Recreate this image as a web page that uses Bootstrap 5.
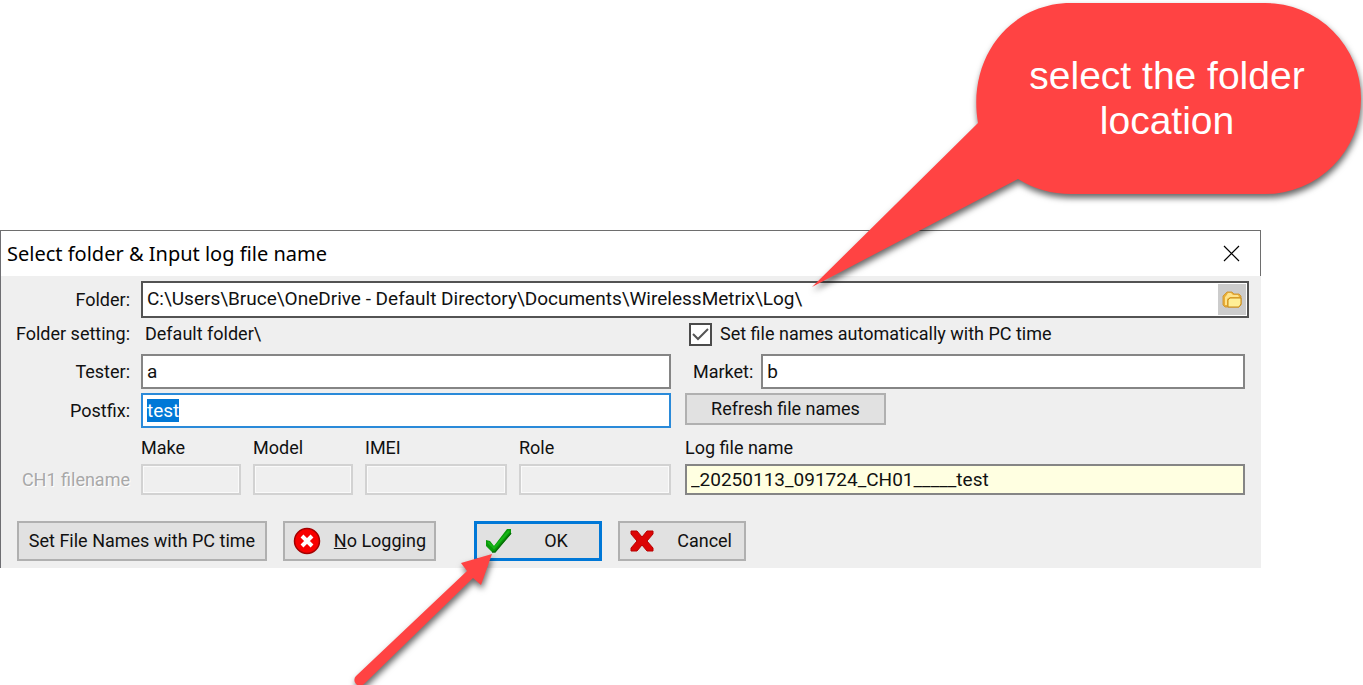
<!DOCTYPE html>
<html lang="en">
<head>
<meta charset="utf-8">
<meta name="viewport" content="width=device-width, initial-scale=1">
<title>Select folder &amp; Input log file name</title>
<link rel="stylesheet" href="https://cdn.jsdelivr.net/npm/bootstrap@5.3.0/dist/css/bootstrap.min.css">
<style>
  body { font: 18px/24px Roboto, "Liberation Sans", sans-serif; color: #111; background: #fff; overflow: hidden; }
  .stage { min-height: 100vh; padding: 230px 102px 0 0; }
  .dialog { border-left: 1px solid #6e6e72; }
  .titlebar { height: 46px; border: solid #6e6e6e; border-width: 1px 1px 0 0; }
  .titlebar h1 { font: 20px/28px "Noto Sans", sans-serif; color: #000; padding-left: 6px; }
  .close-x { width: 58px; }
  .panel { background: #efefef; padding: 5px 12px 7px 0; }
  .folder-line, .row-line { display: grid; align-items: center; }
  .folder-line { grid-template-columns: 140px minmax(0, 1fr); }
  .row-line { grid-template-columns: 126px minmax(0, 530fr) minmax(0, 560fr); column-gap: 14px; padding-right: 4px; }
  .folder-line > :first-child, .row-line > :first-child { text-align: right; white-space: nowrap; }
  .folder-line > :first-child { padding-right: 11px; }
  .row-line > :first-child { margin-right: -3px; }
  .field { font: inherit; font-size: 19px; color: #111; height: 35px; padding: 0 4px; border: 2px solid #858585; border-radius: 0; background: #fff; min-width: 0; width: 100%; }
  .field:focus { outline: 0; border-color: #2a8ad9; }
  .field::selection { background: #0078d7; color: #fff; }
  .folder-box { height: 37px; border: 2px solid #535353; background: #fff; }
  .folder-box .field { border: 0; height: 31px; }
  .browse { width: 28px; height: 31px; margin: 1px 1px 1px 0; background: #ccc; border: 0; padding: 0; }
  .check { appearance: none; width: 23px; height: 23px; border: 2px solid #4b4b4b; background: #fff url("data:image/svg+xml,%3Csvg xmlns='http://www.w3.org/2000/svg' viewBox='0 0 19 19'%3E%3Cpath d='M2 9l5 5L17 4' fill='none' stroke='%23555' stroke-width='2'/%3E%3C/svg%3E"); }
  .slots { display: grid; grid-template-columns: 100fr 100fr 142fr 152fr; column-gap: 12px; }
  .slots .field, .log-name { height: 31px; }
  .slots .field { background: #efefef; border-color: #d2d2d2; box-shadow: inset 0 0 0 1px #fafafa; }
  .log-name { background: #ffffe1; }
  .tool { font: inherit; color: #111; background: #e1e1e1; border: 2px solid #b0b0b0; border-radius: 0; padding: 0; height: 40px; white-space: nowrap; }
  .tool.refresh { width: 201px; height: 32px; }
  .tool.default { border: 3px solid #0078d7; margin-left: 22px; }
  .off { color: #a8a8a8; text-shadow: 1px 1px #fff; }
  .actions { gap: 16px; padding: 26px 0 0 16px; }
  .w-time { width: 250px; } .w-log { width: 153px; } .w-act { width: 128px; }
  .callout { position: absolute; top: 0; right: 0; width: 563px; height: 300px; pointer-events: none; }
  .callout p { position: absolute; top: 53px; right: 21px; width: 350px; font: 39px/45px "Liberation Sans", sans-serif; color: #fff; }
  .pointer { position: absolute; left: 340px; top: 540px; pointer-events: none; }
  .shade { filter: drop-shadow(1px 4px 3px rgba(0,0,0,.6)); }
</style>
</head>
<body>
<main class="stage position-relative">
  <section class="dialog" aria-label="Select folder and input log file name">
    <header class="titlebar d-flex align-items-center justify-content-between">
      <h1 class="m-0">Select folder &amp; Input log file name</h1>
      <button class="close-x btn p-0 border-0 d-flex justify-content-center" type="button" aria-label="Close">
        <svg width="17" height="17" viewBox="0 0 17 17"><path d="M1 1l15 15M16 1L1 16" stroke="#000" stroke-width="1.2"/></svg>
      </button>
    </header>
    <form class="panel">
      <div class="folder-line">
        <label for="folder">Folder:</label>
        <div class="folder-box d-flex">
          <input class="field" id="folder" type="text" value="C:\Users\Bruce\OneDrive - Default Directory\Documents\WirelessMetrix\Log\">
          <button class="browse d-flex align-items-center justify-content-center flex-shrink-0" type="button" aria-label="Browse">
            <svg width="20" height="20" viewBox="0 0 20 20"><path d="M1 15V6l2-2 2-2h5l2 2h5l2 2v9l-2 2H3z" fill="#e9ad35" stroke="#d09a3a"/><path d="M4 6l2-3h3l2 2h5l1 2H8L5 9v6H3V7z" fill="#ffe38a"/><path d="M6 10l2-2h11v6l-2 3H6z" fill="#ffef96" stroke="#c98c18"/></svg>
          </button>
        </div>
      </div>
      <div class="row-line pt-1 pb-1 mb-1">
        <span>Folder setting:</span>
        <output class="ps-1">Default folder\</output>
        <div class="d-flex align-items-center">
          <input class="check m-0 ms-1 me-2" id="auto" type="checkbox" checked>
          <label for="auto">Set file names automatically with PC time</label>
        </div>
      </div>
      <div class="row-line mb-1">
        <label for="tester">Tester:</label>
        <div><input class="field" id="tester" type="text" value="a"></div>
        <div class="d-flex align-items-center">
          <label class="px-2" for="market">Market:</label>
          <input class="field" id="market" type="text" value="b">
        </div>
      </div>
      <div class="row-line mb-1">
        <label for="postfix">Postfix:</label>
        <div><input class="field" id="postfix" type="text" value="test" autofocus></div>
        <button class="tool refresh align-self-start" type="button">Refresh file names</button>
      </div>
      <div class="row-line pt-1 pb-1">
        <span></span>
        <div class="slots"><label for="make">Make</label><label for="model">Model</label><label for="imei">IMEI</label><label for="role">Role</label></div>
        <label for="log">Log file name</label>
      </div>
      <div class="row-line">
        <span class="off">CH1 filename</span>
        <div class="slots">
          <input class="field" id="make" type="text" disabled>
          <input class="field" id="model" type="text" disabled>
          <input class="field" id="imei" type="text" disabled>
          <input class="field" id="role" type="text" disabled>
        </div>
        <div><input class="field log-name" id="log" type="text" readonly value="_20250113_091724_CH01_____test"></div>
      </div>
      <div class="actions d-flex">
        <button class="tool w-time" type="button">Set File Names with PC time</button>
        <button class="tool w-log d-flex align-items-center justify-content-between ps-2 pe-1" type="button">
          <svg width="28" height="28" viewBox="0 0 28 28"><circle cx="14" cy="14" r="12.5" fill="#f80000" stroke="#a30000" stroke-width="1.5"/><path d="M9 9l10 10M19 9L9 19" stroke="#fff" stroke-width="4"/></svg>
          <span class="pe-1"><u>N</u>o Logging</span>
        </button>
        <button class="tool default w-act d-flex align-items-center" type="button">
          <svg class="ms-2" width="28" height="26" viewBox="0 0 28 26"><path d="M1 12l4 1 4 5L22 1h4v5L10 24H7L1 18z" fill="#0a980a"/><path d="M3 14l6 6L24 3" fill="none" stroke="#16b516" stroke-width="2"/><path d="M26 5L10 24H7" fill="none" stroke="#087008" stroke-width="1.5"/></svg>
          <span class="flex-fill text-center">OK</span>
        </button>
        <button class="tool w-act d-flex align-items-center justify-content-between ps-2 pe-2" type="button">
          <svg width="28" height="24" viewBox="0 0 28 24"><path d="M3 2h6l5 6 5-6h6v3l-6 7 6 7v3h-6l-5-6-5 6H3v-3l6-7-6-7z" fill="#dc0505" stroke="#b80000"/></svg>
          <span class="pe-1">Cancel</span>
        </button>
      </div>
    </form>
  </section>

  <aside class="callout">
    <svg class="shade" width="563" height="300" viewBox="0 0 563 300" aria-hidden="true"><path d="M271 3H465A96 95.500 0 0 1 465 194H271Q242 194 218 179L12 287 178 123C167 58 210 3 271 3Z" fill="#ff4343"/></svg>
    <p class="m-0 text-center">select the folder<br>location</p>
  </aside>
  <svg class="pointer shade" width="170" height="145" viewBox="0 0 170 145" aria-hidden="true"><path d="M152 14L121 23l6 8L16 136a5.500 5.500 0 0 0 8 8L133 38l8 7z" fill="#ff4343"/></svg>
</main>
<script src="https://cdn.jsdelivr.net/npm/bootstrap@5.3.0/dist/js/bootstrap.bundle.min.js"></script>
<script>
  const postfix = document.getElementById('postfix');
  postfix.focus();
  postfix.select();
</script>
</body>
</html>
